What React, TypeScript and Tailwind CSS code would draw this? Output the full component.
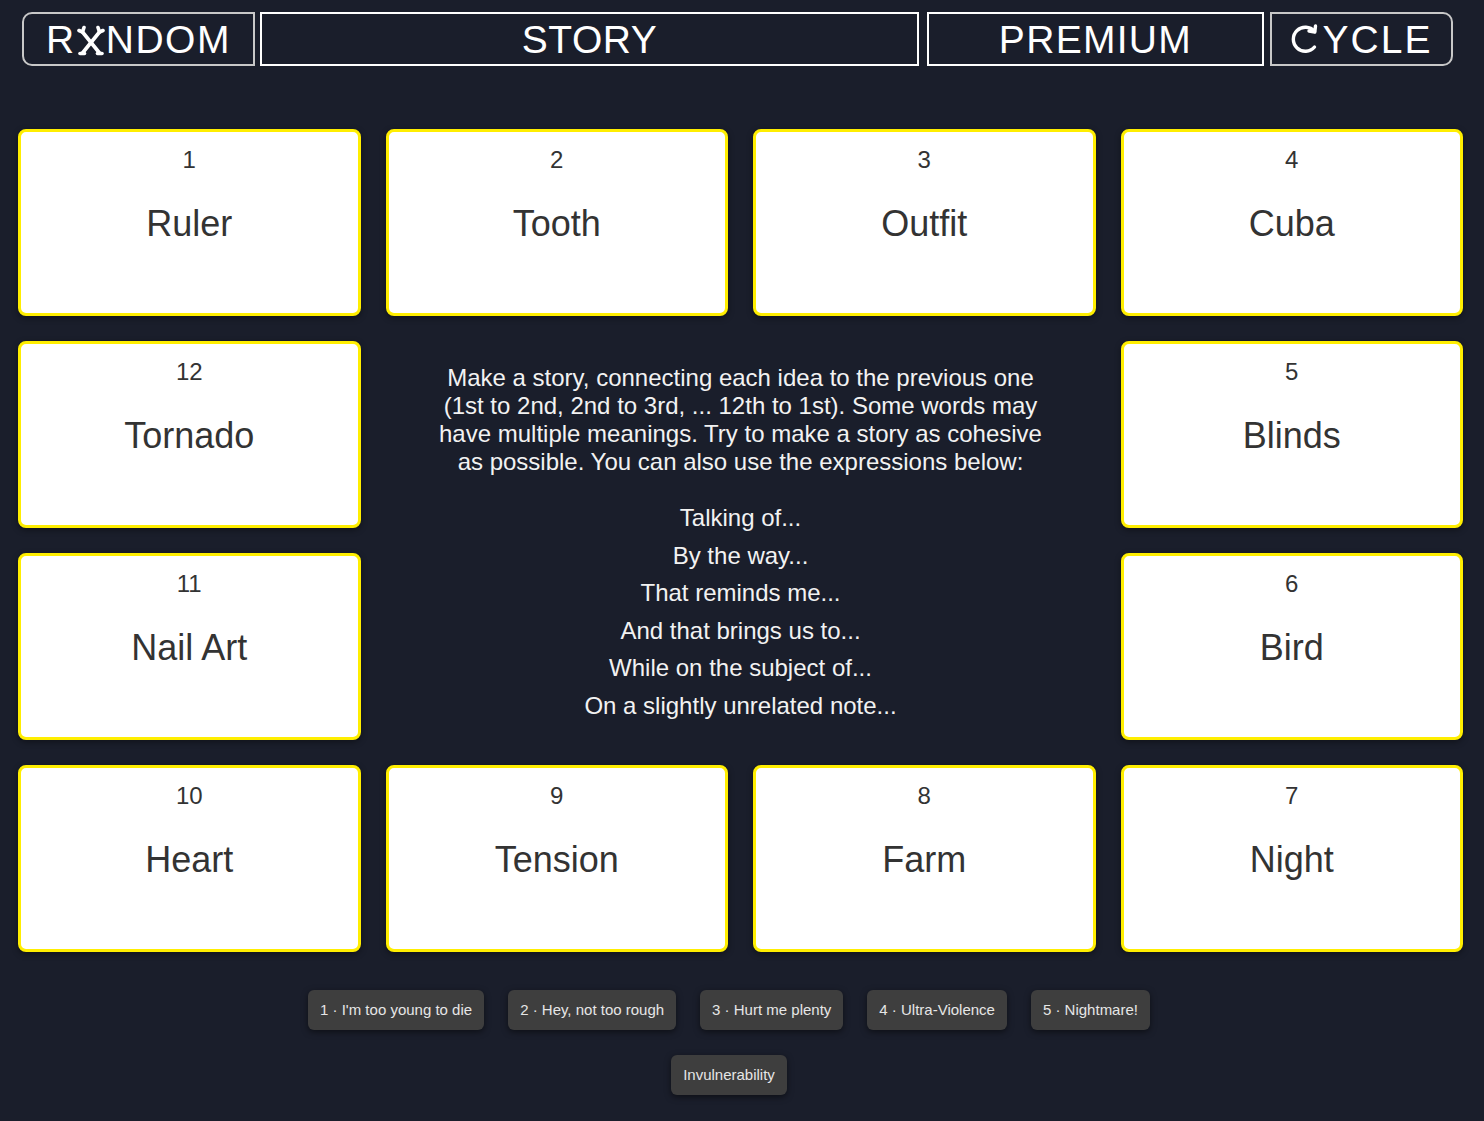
import React from "react";

const font = { fontFamily: '"Liberation Sans", Arial, sans-serif' };

type Card = { n: number; w: string };

function WordCard({ n, w }: Card) {
  return (
    <div className="flex h-[187px] flex-col items-center rounded-[8px] border-[3px] border-[#ffee00] bg-white pt-[14px] text-[#333] shadow-[0_2px_6px_rgba(0,0,0,0.4)]">
      <div className="text-[24px] leading-[28px]">{n}</div>
      <div className="mt-[30px] text-[36px] leading-[40px]">{w}</div>
    </div>
  );
}

function XGlyph() {
  return (
    <svg width="28" height="32" viewBox="0 0 28 32" className="mx-[1px] -mb-[1px]">
      <g fill="none" stroke="white" strokeWidth="3.6" strokeLinecap="round" strokeLinejoin="round">
        <path d="M5.5 29 L22.5 8" />
        <path d="M22.5 29 L5.5 8" />
        <path d="M2 6.5 L5.5 8 L7 3.5" />
        <path d="M26 6.5 L22.5 8 L21 3.5" />
        <path d="M3 29.5 L7.5 29.5" />
        <path d="M20.5 29.5 L25 29.5" />
      </g>
    </svg>
  );
}

function CycleC() {
  return (
    <svg width="30" height="32" viewBox="0 0 30 32" className="mr-[2px]">
      <g fill="none" stroke="white" strokeWidth="3.4" strokeLinecap="round" strokeLinejoin="round">
        <path d="M23.5 8.5 A12 12 0 1 0 23.5 24" />
        <path d="M24.5 3 L23.8 9 L18 8" />
      </g>
    </svg>
  );
}

const btn =
  "h-[40px] rounded-[6px] bg-[#3e3e3e] px-[12px] text-[15px] text-[#e6e6e6] shadow-[0_2px_6px_rgba(0,0,0,0.5)]";

export default function App() {
  const top: Card[] = [
    { n: 1, w: "Ruler" },
    { n: 2, w: "Tooth" },
    { n: 3, w: "Outfit" },
    { n: 4, w: "Cuba" },
  ];
  const bottom: Card[] = [
    { n: 10, w: "Heart" },
    { n: 9, w: "Tension" },
    { n: 8, w: "Farm" },
    { n: 7, w: "Night" },
  ];
  const exprs = [
    "Talking of...",
    "By the way...",
    "That reminds me...",
    "And that brings us to...",
    "While on the subject of...",
    "On a slightly unrelated note...",
  ];
  const levels = [
    "1 · I'm too young to die",
    "2 · Hey, not too rough",
    "3 · Hurt me plenty",
    "4 · Ultra-Violence",
    "5 · Nightmare!",
  ];

  return (
    <div className="min-h-[1121px] w-full bg-[#1a1e2b]" style={font}>
      {/* header */}
      <div className="flex pt-[12px] pl-[22px]">
        <div className="flex h-[54px] w-[233px] items-center justify-center rounded-l-[10px] border-2 border-[#c8c8c8] text-[39px] leading-none tracking-[1.5px] text-white">
          <span>R</span>
          <XGlyph />
          <span>NDOM</span>
        </div>
        <div className="ml-[5px] flex h-[54px] w-[659px] items-center justify-center border-2 border-white text-[39px] leading-none tracking-[0.5px] text-white">
          STORY
        </div>
        <div className="ml-[8px] flex h-[54px] w-[337px] items-center justify-center border-2 border-white text-[39px] leading-none tracking-[1.3px] text-white">
          PREMIUM
        </div>
        <div className="ml-[6px] flex h-[54px] w-[183px] items-center justify-center rounded-r-[10px] border-2 border-[#c8c8c8] text-[39px] leading-none tracking-[2px] text-white">
          <CycleC />
          <span>YCLE</span>
        </div>
      </div>

      {/* grid */}
      <div className="ml-[18px] mt-[63px] grid w-[1445px] grid-cols-4 gap-x-[25px] gap-y-[25px]">
        {top.map((c) => (
          <WordCard key={c.n} {...c} />
        ))}
        <WordCard n={12} w="Tornado" />
        <div className="col-span-2 row-span-2 flex flex-col items-center pt-[23px] text-center text-[#f2f2f2]">
          <p className="w-[612px] text-[24px] leading-[28px]">
            Make a story, connecting each idea to the previous one (1st to 2nd, 2nd to 3rd, ... 12th to 1st). Some
            words may have multiple meanings. Try to make a story as cohesive as possible. You can also use the
            expressions below:
          </p>
          <div className="mt-[23px] flex flex-col items-center">
            {exprs.map((e) => (
              <div key={e} className="text-[24px] leading-[37.6px]">
                {e}
              </div>
            ))}
          </div>
        </div>
        <WordCard n={5} w="Blinds" />
        <WordCard n={11} w="Nail Art" />
        <WordCard n={6} w="Bird" />
        {bottom.map((c) => (
          <WordCard key={c.n} {...c} />
        ))}
      </div>

      {/* levels */}
      <div className="mt-[38px] flex flex-col items-center pr-[26px] pb-[25px]">
        <div className="flex justify-center gap-x-[24px]">
          {levels.map((l) => (
            <button key={l} className={btn} style={font}>
              {l}
            </button>
          ))}
        </div>
        <div className="mt-[25px] flex justify-center">
          <button className={btn} style={font}>
            Invulnerability
          </button>
        </div>
      </div>
    </div>
  );
}
